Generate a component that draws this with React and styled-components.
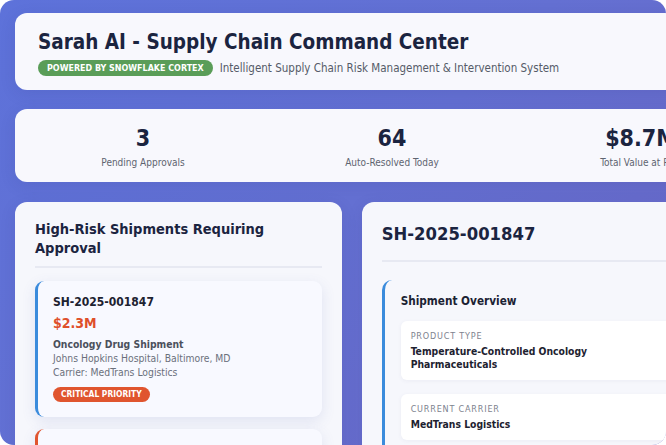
import React from "react";
import styled, { createGlobalStyle } from "styled-components";

const GlobalStyle = createGlobalStyle`
  html, body {
    margin: 0;
    padding: 0;
    background: #ffffff;
  }
  body {
    font-family: "DejaVu Sans Condensed", "DejaVu Sans", "Liberation Sans", sans-serif;
    font-stretch: condensed;
  }
`;

// Rounded window that clips the wide dashboard
const Frame = styled.div`
  width: 666px;
  height: 445px;
  border-radius: 14px;
  overflow: hidden;
  background: linear-gradient(135deg, #5d72da 0%, #6470d2 50%, #6a68c6 100%);
`;

const Page = styled.div`
  width: 1000px;
  padding: 13px 0 0 15px;
  display: flex;
  flex-direction: column;
  gap: 19px;
`;

const HeaderCard = styled.header`
  background: #f8f8fd;
  border-radius: 12px;
  padding: 17px 23px 14px;
  box-shadow: 0 4px 16px rgba(40, 50, 120, 0.12);
`;

const Title = styled.h1`
  margin: 0;
  font-size: 20.5px;
  line-height: 24px;
  font-weight: 700;
  color: #1b2440;
`;

const SubRow = styled.div`
  display: flex;
  align-items: center;
  gap: 7px;
  margin-top: 6px;
`;

const Pill = styled.span`
  display: inline-block;
  background: ${({ tone }) => tone};
  color: #ffffff;
  font-weight: 700;
  font-size: ${({ size }) => size}px;
  line-height: ${({ h }) => h}px;
  padding: 0 ${({ pad }) => pad}px;
  border-radius: 10px;
  white-space: nowrap;
`;

const Subtitle = styled.span`
  font-size: 11.5px;
  color: #555b68;
`;

const StatsCard = styled.section`
  background: #f8f8fd;
  border-radius: 12px;
  padding: 16px 14px 13px;
  display: grid;
  grid-template-columns: repeat(4, 228px);
  column-gap: 21px;
  box-shadow: 0 4px 16px rgba(40, 50, 120, 0.12);
`;

const Stat = styled.div`
  text-align: center;
`;

const StatValue = styled.div`
  font-size: 23px;
  line-height: 27px;
  font-weight: 700;
  color: #1b2440;
`;

const StatLabel = styled.div`
  margin-top: 4px;
  font-size: 10px;
  line-height: 13px;
  color: #5e6470;
`;

const Columns = styled.div`
  display: grid;
  grid-template-columns: 1fr 2fr;
  gap: 20px;
  margin-top: 1px;
`;

const Panel = styled.section`
  background: #f6f7fc;
  border-radius: 12px;
  padding: ${({ top }) => top}px 20px 20px;
  height: 400px;
  box-shadow: 0 4px 16px rgba(40, 50, 120, 0.12);
`;

const PanelTitle = styled.h2`
  margin: 0;
  font-size: ${({ size }) => size}px;
  line-height: ${({ lh }) => lh}px;
  font-weight: 700;
  color: #1b2440;
  padding-bottom: ${({ pb }) => pb}px;
  border-bottom: 2px solid #e7e9f2;
`;

const ShipmentList = styled.div`
  display: flex;
  flex-direction: column;
  gap: 12px;
  margin-top: 13px;
`;

const ShipmentCard = styled.article`
  background: #f8f9ff;
  border-left: 3px solid ${({ accent }) => accent};
  border-radius: 9px;
  padding: 14px 15px 15px;
  box-shadow: 0 4px 14px rgba(80, 95, 170, 0.13);
`;

const ShipId = styled.div`
  font-size: 12px;
  line-height: 15px;
  font-weight: 700;
  color: #1d2230;
`;

const ShipValue = styled.div`
  margin-top: 4px;
  font-size: 14px;
  line-height: 18px;
  font-weight: 700;
  color: #df4f2a;
`;

const ShipName = styled.div`
  margin-top: 5px;
  font-size: 10.3px;
  line-height: 14px;
  font-weight: 700;
  color: #4b505c;
`;

const ShipMeta = styled.div`
  font-size: 10.3px;
  line-height: 14px;
  color: #6b707c;
`;

const BadgeRow = styled.div`
  margin-top: 8px;
  line-height: 0;
`;

const Section = styled.div`
  margin-top: 18px;
  border-left: 3px solid #3a8bdc;
  border-radius: 10px 0 0 10px;
  padding: 14px 16px 16px;
`;

const SectionTitle = styled.h3`
  margin: 0 0 12px;
  font-size: 11.7px;
  line-height: 15px;
  font-weight: 700;
  color: #1b2233;
`;

const InfoGrid = styled.div`
  display: grid;
  grid-template-columns: 1fr 1fr;
  column-gap: 15px;
  row-gap: 14px;
`;

const InfoBox = styled.div`
  background: #ffffff;
  border-radius: 6px;
  padding: 9px 10px 9px;
  box-shadow: 0 1px 4px rgba(60, 70, 120, 0.06);
`;

const InfoLabel = styled.div`
  font-size: 9px;
  line-height: 12px;
  letter-spacing: 0.8px;
  text-transform: uppercase;
  color: #7d828e;
`;

const InfoValue = styled.div`
  margin-top: 3px;
  font-size: 10.3px;
  line-height: 13px;
  font-weight: 700;
  color: #1d2230;
`;

const stats = [
  { value: "3", label: "Pending Approvals" },
  { value: "64", label: "Auto-Resolved Today" },
  { value: "$8.7M", label: "Total Value at Risk" },
  { value: "97%", label: "On-Time Delivery" },
];

const shipments = [
  {
    id: "SH-2025-001847",
    value: "$2.3M",
    name: "Oncology Drug Shipment",
    dest: "Johns Hopkins Hospital, Baltimore, MD",
    carrier: "MedTrans Logistics",
    accent: "#3a8bdc",
  },
  {
    id: "SH-2025-002193",
    value: "$1.8M",
    name: "Vaccine Cold Chain",
    dest: "Mayo Clinic, Rochester, MN",
    carrier: "ColdLink Express",
    accent: "#e0552f",
  },
];

const overview = [
  { label: "Product Type", value: "Temperature-Controlled Oncology Pharmaceuticals" },
  { label: "Destination", value: "Johns Hopkins Hospital, Baltimore, MD" },
  { label: "Current Carrier", value: "MedTrans Logistics" },
  { label: "Shipment Value", value: "$2.3M" },
];

export default function App() {
  return (
    <>
      <GlobalStyle />
      <Frame>
        <Page>
          <HeaderCard>
            <Title>Sarah AI - Supply Chain Command Center</Title>
            <SubRow>
              <Pill tone="#5a9d58" size={8.9} h={16} pad={9}>
                POWERED BY SNOWFLAKE CORTEX
              </Pill>
              <Subtitle>
                Intelligent Supply Chain Risk Management &amp; Intervention System
              </Subtitle>
            </SubRow>
          </HeaderCard>

          <StatsCard>
            {stats.map((s) => (
              <Stat key={s.label}>
                <StatValue>{s.value}</StatValue>
                <StatLabel>{s.label}</StatLabel>
              </Stat>
            ))}
          </StatsCard>

          <Columns>
            <Panel top={18}>
              <PanelTitle size={14.5} lh={19} pb={8}>
                High-Risk Shipments Requiring Approval
              </PanelTitle>
              <ShipmentList>
                {shipments.map((s) => (
                  <ShipmentCard key={s.id} accent={s.accent}>
                    <ShipId>{s.id}</ShipId>
                    <ShipValue>{s.value}</ShipValue>
                    <ShipName>{s.name}</ShipName>
                    <ShipMeta>{s.dest}</ShipMeta>
                    <ShipMeta>Carrier: {s.carrier}</ShipMeta>
                    <BadgeRow>
                      <Pill tone="#e0552f" size={8.4} h={15} pad={8}>
                        CRITICAL PRIORITY
                      </Pill>
                    </BadgeRow>
                  </ShipmentCard>
                ))}
              </ShipmentList>
            </Panel>

            <Panel top={20}>
              <PanelTitle size={18.3} lh={23} pb={15}>
                SH-2025-001847
              </PanelTitle>
              <Section>
                <SectionTitle>Shipment Overview</SectionTitle>
                <InfoGrid>
                  {overview.map((o) => (
                    <InfoBox key={o.label}>
                      <InfoLabel>{o.label}</InfoLabel>
                      <InfoValue>{o.value}</InfoValue>
                    </InfoBox>
                  ))}
                </InfoGrid>
              </Section>
            </Panel>
          </Columns>
        </Page>
      </Frame>
    </>
  );
}
